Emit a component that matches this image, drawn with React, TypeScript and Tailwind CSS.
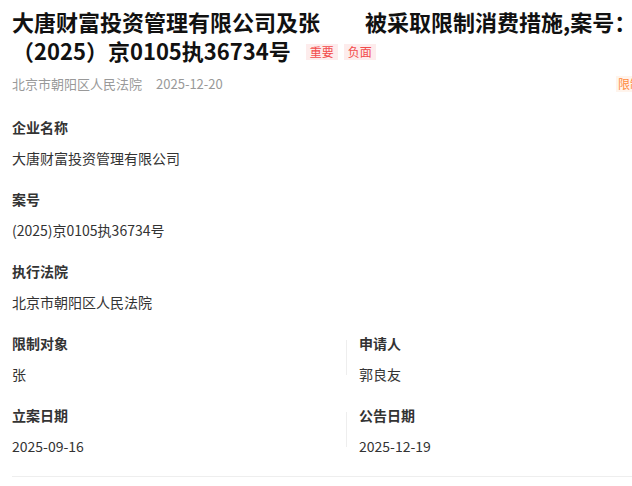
import React from 'react';

type Field = { label: string; value: React.ReactNode };

function FieldBlock({ label, value, last }: Field & { last?: boolean }) {
  return (
    <div className={last ? 'mb-[20px]' : 'mb-[21px]'}>
      <div className="text-sm leading-5 font-bold text-[#333]">{label}</div>
      <div className="mt-[11px] text-sm leading-5 text-[#333]">{value}</div>
    </div>
  );
}

function PairRow({ left, right, last }: { left: Field; right: Field; last?: boolean }) {
  return (
    <div className="grid grid-cols-[334px_1px_1fr]">
      <FieldBlock {...left} last={last} />
      <div className="mt-[7px] h-[35px] bg-[#eeeeee]" />
      <div className="pl-3">
        <FieldBlock {...right} last={last} />
      </div>
    </div>
  );
}

export default function App() {
  return (
    <div className="w-full overflow-hidden bg-white">
      <div className="w-[692px] px-3 pt-[7px] font-['Noto_Sans_CJK_SC',sans-serif] text-[#333]">
        {/* Title + tags */}
        <h1 className="text-[22px] leading-[29px] font-bold text-[#111]">
          大唐财富投资管理有限公司及张<span className="inline-block w-[45px]" />被采取限制消费措施,案号：（2025）京0105执36734号
          <span className="ml-[15px] inline-flex gap-[6px] align-[3px]">
            <span className="px-1 text-xs leading-4 font-normal bg-[#fdecec] text-[#f24b4b]">重要</span>
            <span className="px-1 text-xs leading-4 font-normal bg-[#fdecec] text-[#f24b4b]">负面</span>
          </span>
        </h1>

        {/* Court / date meta */}
        <div className="mt-[9px] flex h-5 items-center justify-between">
          <div className="text-[13px] text-[#999]">
            北京市朝阳区人民法院<span className="ml-[14px]">2025-12-20</span>
          </div>
          <span className="px-[2px] text-xs leading-4 bg-[#fff4ec] text-[#ff8a3d]">限制高消费</span>
        </div>

        {/* Detail fields */}
        <div className="mt-[23px]">
          <FieldBlock label="企业名称" value="大唐财富投资管理有限公司" />
          <FieldBlock label="案号" value="(2025)京0105执36734号" />
          <FieldBlock label="执行法院" value="北京市朝阳区人民法院" />
          <PairRow
            left={{ label: '限制对象', value: '张' }}
            right={{ label: '申请人', value: '郭良友' }}
          />
          <PairRow
            left={{ label: '立案日期', value: '2025-09-16' }}
            right={{ label: '公告日期', value: '2025-12-19' }}
            last
          />
          <div className="h-px bg-[#eeeeee]" />
        </div>
      </div>
    </div>
  );
}
